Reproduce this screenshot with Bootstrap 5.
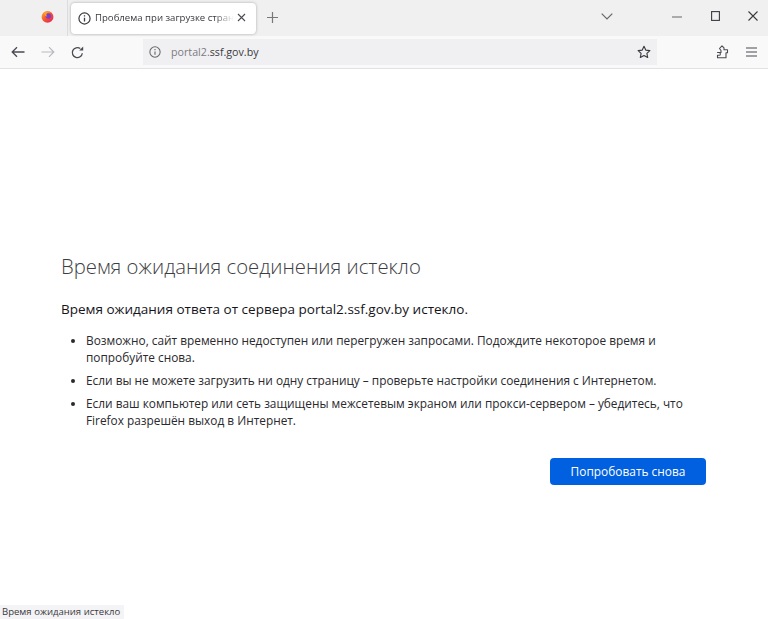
<!DOCTYPE html>
<html lang="ru">
<head>
<meta charset="utf-8">
<title>Проблема при загрузке страницы</title>
<link rel="stylesheet" href="https://cdn.jsdelivr.net/npm/bootstrap@5.3.0/dist/css/bootstrap.min.css">
<style>
html,body{height:619px;overflow:hidden;background:#fff}
body{font-family:"Open Sans","Noto Sans",sans-serif;color:#15141a;position:relative}
.tabstrip{height:36px;background:#f0f0f1}
.fx-logo{margin-left:41px;width:13px;height:13px;margin-top:-3px}
.tab-sep{width:1px;height:36px;background:#dcdce0;margin-left:13px}
.fx-tab{width:185px;height:31px;margin-left:3px;margin-top:1px;background:#fff;border-radius:4px;box-shadow:0 0 3px rgba(0,0,0,.3);padding-left:7px;font-size:9.6px;color:#3a3a40;white-space:nowrap}
.tab-title{width:142px;margin-left:4px;-webkit-mask-image:linear-gradient(to right,#000 84%,transparent 98%);mask-image:linear-gradient(to right,#000 84%,transparent 98%)}
.tab-x{margin-top:-2px}
.plus-ic{margin-left:11px;margin-top:-2px}
.win-ctl{margin-left:auto}
.chev-ic{margin-right:59px}
.min-ic{margin-right:29px}
.max-ic{margin-right:28px}
.close-ic{margin-right:10px}
.win-ctl,.min-ic,.max-ic,.close-ic{margin-top:-4px}
.toolbar{height:33px;background:#f9f9fa;border-bottom:1px solid #e2e2e4;padding-left:11px}
.url-box{width:514px;height:26px;background:#f0f0f2;margin-left:59px;padding-left:6px;font-size:10.7px;color:#15141a}
.url-host{margin-left:10px;color:#7b7b80;padding-top:1px}
.url-host b{font-weight:400;color:#3a3a40}
.star-ic{margin-left:auto;margin-right:6px}
.tool-end{margin-left:59px}
.menu-ic{margin-left:17px}
.err-page{padding:183px 62px 0 61px}
.err-title{font-size:20.3px;font-weight:300;line-height:28px;color:#3d3d42;margin:0 0 20px}
.err-lead{font-size:13.5px;line-height:18px;margin:0 0 14px;color:#15141a}
.err-list{font-size:11.85px;line-height:17px;padding-left:25px;margin:0 0 29px;color:#2a2a2e}
.err-list li{margin-bottom:6px}
.retry{width:156px;height:27px;background:#0060df;color:#fff;border:0;border-radius:4px;font-size:11.9px;font-weight:500;padding:0}
.retry:hover{background:#0060df;color:#fff}
.status-tip{position:absolute;left:0;bottom:0;height:14px;width:124px;background:#f4f4f6;font-size:9.55px;line-height:14px;padding-left:2px;color:#3a3a40;white-space:nowrap}
</style>
</head>
<body>
<div class="tabstrip d-flex align-items-center">
  <svg class="fx-logo flex-shrink-0" viewBox="0 0 16 16"><defs><linearGradient id="g1" x1="0" y1="0" x2="1" y2="1"><stop offset="0" stop-color="#ffb52e"/><stop offset=".5" stop-color="#f5512e"/><stop offset="1" stop-color="#e5206b"/></linearGradient></defs><circle cx="8" cy="8.500" r="7.300" fill="url(#g1)"/><circle cx="9" cy="7.400" r="3.400" fill="#7a3fc8"/><path d="M4 3.500c2-2 6-2.500 8 0-2-1-4-.6-5 .8-.8 1.200-.4 3 1 3.800-2.500.2-4.500-2-4-4.600z" fill="#ff9f2e"/></svg>
  <div class="tab-sep flex-shrink-0"></div>
  <div class="fx-tab d-flex align-items-center flex-shrink-0">
    <svg width="13" height="13" viewBox="0 0 14 14" class="flex-shrink-0"><circle cx="7" cy="7" r="6" fill="none" stroke="#3a3a40" stroke-width="1.300"/><path d="M7 6.300v4M7 3.600v1.300" stroke="#3a3a40" stroke-width="1.400"/></svg>
    <span class="tab-title">Проблема при загрузке стран</span>
    <svg class="tab-x flex-shrink-0" width="9" height="9" viewBox="0 0 9 9"><path d="M1 1l7 7M8 1L1 8" stroke="#4a4a50" stroke-width="1.100"/></svg>
  </div>
  <svg class="plus-ic flex-shrink-0" width="11" height="11" viewBox="0 0 11 11"><path d="M5.500 0v11M0 5.500h11" stroke="#77777c" stroke-width="1.200"/></svg>
  <svg class="win-ctl chev-ic flex-shrink-0" width="12" height="7" viewBox="0 0 12 7"><path d="M.7.700l5.300 5.300L11.300.700" fill="none" stroke="#66666b" stroke-width="1.200"/></svg>
  <svg class="min-ic flex-shrink-0" width="10" height="10" viewBox="0 0 10 10"><path d="M0 6h10" stroke="#66666b" stroke-width="1"/></svg>
  <svg class="max-ic flex-shrink-0" width="9" height="10" viewBox="0 0 9 10"><rect x=".6" y=".6" width="7.800" height="8.800" fill="none" stroke="#3a3a40" stroke-width="1.100"/></svg>
  <svg class="close-ic flex-shrink-0" width="10" height="10" viewBox="0 0 10 10"><path d="M.5.500l9 9M9.500.500l-9 9" stroke="#3a3a40" stroke-width="1.100"/></svg>
</div>
<div class="toolbar d-flex align-items-center">
  <svg class="flex-shrink-0" width="14" height="12" viewBox="0 0 14 12"><path d="M13.500 6H1.500M6 1.200L1.200 6 6 10.800" fill="none" stroke="#4a4a50" stroke-width="1.300"/></svg>
  <svg class="flex-shrink-0 ms-3" width="14" height="12" viewBox="0 0 14 12"><path d="M.5 6h12M8 1.200L12.800 6 8 10.800" fill="none" stroke="#b9b9be" stroke-width="1.200"/></svg>
  <svg class="flex-shrink-0 ms-3" width="13" height="13" viewBox="0 0 13 13"><path d="M11.300 7.200A5 5 0 1 1 9.300 2.600" fill="none" stroke="#4a4a50" stroke-width="1.300"/><path d="M12.200.5v4h-4z" fill="#4a4a50"/></svg>
  <div class="url-box d-flex align-items-center flex-shrink-0">
    <svg width="12" height="12" viewBox="0 0 14 14" class="flex-shrink-0"><circle cx="7" cy="7" r="6" fill="none" stroke="#66666b" stroke-width="1.200"/><path d="M7 6.300v4M7 3.600v1.300" stroke="#66666b" stroke-width="1.300"/></svg>
    <span class="url-host">portal2.<b>ssf.gov.by</b></span>
    <svg class="star-ic flex-shrink-0" width="14" height="14" viewBox="0 0 16 16"><path d="M8 1.500l2 4.300 4.700.6-3.400 3.200.9 4.700L8 12l-4.200 2.300.9-4.700L1.300 6.400 6 5.800z" fill="none" stroke="#3a3a40" stroke-width="1.300" stroke-linejoin="round"/></svg>
  </div>
  <svg class="tool-end flex-shrink-0" width="13" height="14" viewBox="0 0 13 14"><path d="M1.500 7.500H5V5.500L3.500 3.500 6 .8l2 2v2h3.500v3h-1.500v5H1.500v-2.500H3a1 1 0 0 0 0-2.800H1.500z" fill="none" stroke="#4a4a50" stroke-width="1.100" stroke-linejoin="round"/></svg>
  <svg class="menu-ic flex-shrink-0" width="11" height="10" viewBox="0 0 11 10"><path d="M0 1h11M0 5h11M0 9h11" stroke="#4a4a50" stroke-width="1.100"/></svg>
</div>
<main class="err-page">
  <h1 class="err-title">Время ожидания соединения истекло</h1>
  <p class="err-lead">Время ожидания ответа от сервера portal2.ssf.gov.by истекло.</p>
  <ul class="err-list">
    <li>Возможно, сайт временно недоступен или перегружен запросами. Подождите некоторое время и попробуйте снова.</li>
    <li>Если вы не можете загрузить ни одну страницу – проверьте настройки соединения с Интернетом.</li>
    <li>Если ваш компьютер или сеть защищены межсетевым экраном или прокси-сервером – убедитесь, что Firefox разрешён выход в Интернет.</li>
  </ul>
  <div class="d-flex justify-content-end"><button type="button" class="btn retry">Попробовать снова</button></div>
</main>
<div class="status-tip">Время ожидания истекло</div>
<script src="https://cdn.jsdelivr.net/npm/bootstrap@5.3.0/dist/js/bootstrap.bundle.min.js"></script>
</body>
</html>
